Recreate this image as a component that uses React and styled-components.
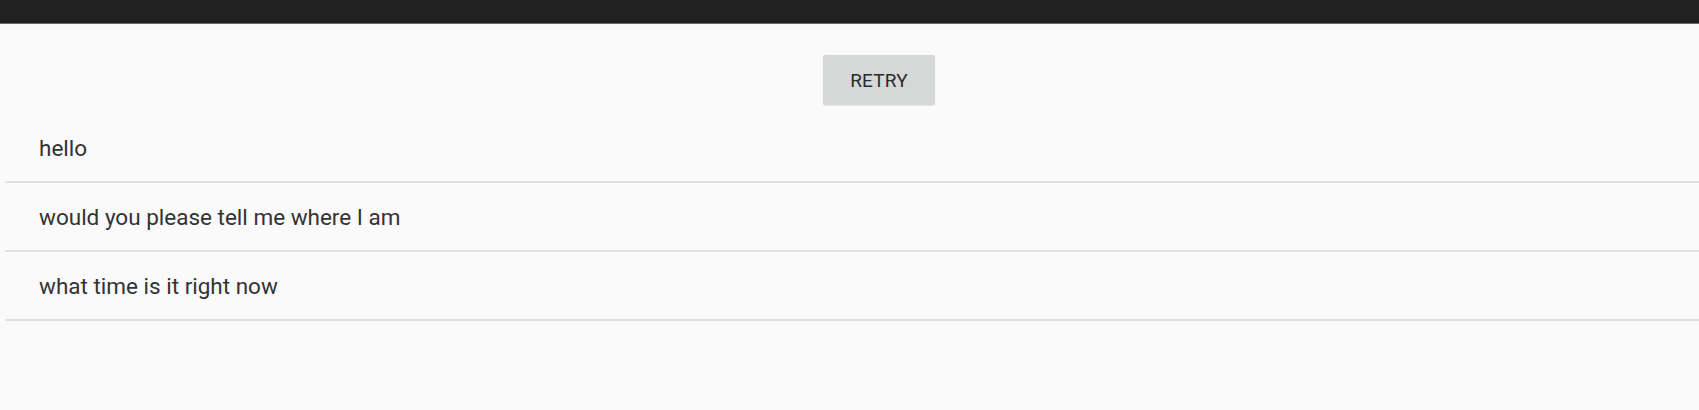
import React from "react";
import styled, { createGlobalStyle } from "styled-components";

const GlobalStyle = createGlobalStyle`
  html, body {
    margin: 0;
    padding: 0;
    background: #fafafa;
    font-family: Roboto, "Liberation Sans", sans-serif;
  }
`;

const Screen = styled.div`
  width: 1699px;
  height: 410px;
  background: #fafafa;
  overflow: hidden;
`;

const StatusBar = styled.div`
  height: 24px;
  background: #212121;
  border-bottom: 1px solid #6a6a6a;
  box-sizing: border-box;
`;

const ButtonRow = styled.div`
  display: flex;
  padding: 31px 0 0 823px;
`;

const Button = styled.button`
  width: 112px;
  height: 50px;
  border: none;
  border-radius: 2px;
  background: #d6d7d7;
  box-shadow: 0 1px 1px rgba(0, 0, 0, 0.08);
  color: #2b2b2b;
  font-family: Roboto, "Liberation Sans", sans-serif;
  font-size: 19px;
  letter-spacing: 0.2px;
  padding: 1px 0 0;
  cursor: pointer;
`;

const List = styled.ul`
  list-style: none;
  margin: 9px 0 0 5px;
  padding: 0;
`;

const Row = styled.li`
  box-sizing: border-box;
  height: 69px;
  display: flex;
  align-items: center;
  padding: 1px 0 0 34px;
  border-bottom: 2px solid #e0e0e0;
  color: #333333;
  font-size: 22.5px;
`;

const items = ["hello", "would you please tell me where I am", "what time is it right now"];

export default function App() {
  return (
    <Screen>
      <GlobalStyle />
      <StatusBar />
      <ButtonRow>
        <Button>RETRY</Button>
      </ButtonRow>
      <List>
        {items.map(text => (
          <Row key={text}>{text}</Row>
        ))}
      </List>
    </Screen>
  );
}
